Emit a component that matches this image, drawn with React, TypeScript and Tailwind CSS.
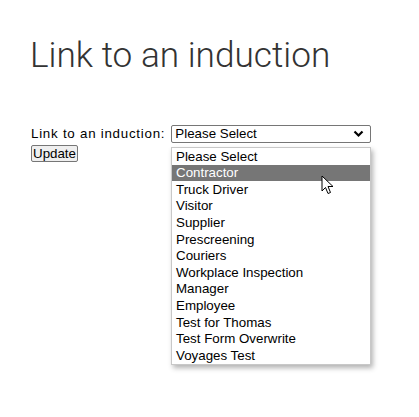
import React from "react";

const items = [
  "Please Select",
  "Contractor",
  "Truck Driver",
  "Visitor",
  "Supplier",
  "Prescreening",
  "Couriers",
  "Workplace Inspection",
  "Manager",
  "Employee",
  "Test for Thomas",
  "Test Form Overwrite",
  "Voyages Test",
];

export default function App() {
  return (
    <div className="relative w-[419px] h-[417px] bg-white overflow-hidden">
      <div className="pl-[31px] pt-[35px]">
        <h1 className="font-['Roboto',sans-serif] font-light text-[35.2px] leading-[40px] text-[#333333] -ml-[1px]">
          Link to an induction
        </h1>
        <div className="mt-[50px] h-[18px] flex items-center font-['Liberation_Sans',Arial,sans-serif] text-[13.33px] leading-none text-black">
          <span className="tracking-[0.75px] mr-[6px]">Link to an induction:</span>
          <div className="relative w-[200px] h-[18px] border border-[#767676] rounded-[2px] flex items-center pl-[3px] bg-white">
            <span className="leading-none">Please Select</span>
            <svg className="absolute right-[6px] top-[4px]" width="11" height="8" viewBox="0 0 11 8">
              <path d="M1.5 1.5 L5.5 5.5 L9.5 1.5" stroke="#000" strokeWidth="2.2" fill="none" />
            </svg>
          </div>
        </div>
        <div className="mt-[2px] flex">
          <button className="block font-['Liberation_Sans',Arial,sans-serif] text-[13.33px] leading-none text-black bg-[#efefef] border border-[#767676] rounded-[2px] px-[1px] h-[17px]">
            Update
          </button>
        </div>
      </div>
      <div className="absolute left-[171px] top-[147px] w-[200px] bg-white border border-[#c8c8c8] shadow-[2px_3px_5px_rgba(0,0,0,0.3)] font-['Liberation_Sans',Arial,sans-serif] text-[13.33px]">
        {items.map((it, i) => (
          <div
            key={it}
            className={
              "h-[16.6px] flex items-center pl-[4px] leading-none " +
              (i === 1 ? "bg-[#767676] text-white" : "text-black")
            }
          >
            {it}
          </div>
        ))}
      </div>
      <svg className="absolute left-[321px] top-[175px]" width="13" height="20" viewBox="0 0 13 20">
        <path d="M1 1 L1 16 L4.5 12.5 L7 18.5 L9.5 17.5 L7 11.5 L12 11.5 Z" fill="#fff" stroke="#000" strokeWidth="1" strokeLinejoin="round" />
      </svg>
    </div>
  );
}
